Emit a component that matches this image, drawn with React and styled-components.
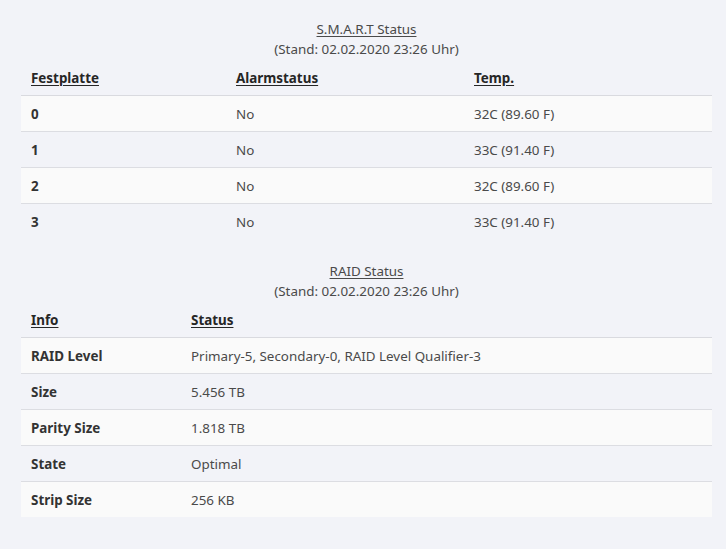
import React from "react";
import styled, { createGlobalStyle } from "styled-components";

// --------------------------------------------------

const GlobalStyle = createGlobalStyle`
	html, body {
		margin: 0;
		padding: 0;
		background: #f2f3f8;
	}

	body {
		font-family: "Noto Sans", "Open Sans", "Liberation Sans", sans-serif;
		font-size: 13.4px;
		color: #454545;
	}
`;

const Page = styled.div`
	padding: 19px 14px 0 21px;
	min-height: 549px;
	box-sizing: border-box;
`;

const Section = styled.section`
	margin-bottom: ${ props => props.gap || 0 }px;
`;

const Caption = styled.div`
	text-align: center;
	line-height: 20px;
	color: #4a4a4a;
`;

const CaptionTitle = styled.div`
	text-decoration: underline;
	text-underline-offset: 2px;
`;

const Table = styled.table`
	width: 100%;
	border-collapse: collapse;
	table-layout: fixed;
	margin-top: 2px;
`;

const HeadCell = styled.th`
	text-align: left;
	font-weight: 700;
	color: #262626;
	text-decoration: underline;
	text-underline-offset: 2px;
	padding: 8px 10px 7px;
	height: 19px;
	line-height: 19px;
	border-bottom: 1px solid #d9dadf;
`;

const Row = styled.tr`
	background: ${ props => props.striped ? "#fafafa" : "transparent" };
	border-bottom: ${ props => props.last ? "none" : "1px solid #dcdde2" };
`;

const Cell = styled.td`
	padding: 2px 10px 0;
	height: 33px;
	line-height: 19px;
	font-weight: ${ props => props.bold ? 700 : 400 };
	color: ${ props => props.bold ? "#333" : "#4a4a4a" };
`;

// --------------------------------------------------

const smartRows = [
	[ "0", "No", "32C (89.60 F)", ],
	[ "1", "No", "33C (91.40 F)", ],
	[ "2", "No", "32C (89.60 F)", ],
	[ "3", "No", "33C (91.40 F)", ],
];

const raidRows = [
	[ "RAID Level", "Primary-5, Secondary-0, RAID Level Qualifier-3", ],
	[ "Size", "5.456 TB", ],
	[ "Parity Size", "1.818 TB", ],
	[ "State", "Optimal", ],
	[ "Strip Size", "256 KB", ],
];

const StatusTable = ( { title, stand, headers, widths, rows, lastBorder, }, ) => (
	<>
		<Caption>
			<CaptionTitle>{ title }</CaptionTitle>
			<div>(Stand: { stand } Uhr)</div>
		</Caption>
		<Table>
			<colgroup>
				{ widths.map( ( w, i ) => <col key = { i } width = { w } /> ) }
			</colgroup>
			<thead>
				<tr>
					{ headers.map( h => <HeadCell key = { h }>{ h }</HeadCell> ) }
				</tr>
			</thead>
			<tbody>
				{ rows.map( ( row, i ) => (
					<Row key = { i } striped = { i % 2 === 0 } last = { !lastBorder && i === rows.length - 1 }>
						{ row.map( ( c, j ) => (
							<Cell key = { j } bold = { j === 0 }>{ c }</Cell>
						) ) }
					</Row>
				) ) }
			</tbody>
		</Table>
	</>
);

const App = () => (
	<>
		<GlobalStyle />
		<Page>
			<Section gap = { 22 }>
				<StatusTable
					title = "S.M.A.R.T Status"
					stand = "02.02.2020 23:26"
					headers = { [ "Festplatte", "Alarmstatus", "Temp.", ] }
					widths = { [ 205, 238, "*", ] }
					rows = { smartRows }
				/>
			</Section>
			<Section>
				<StatusTable
					title = "RAID Status"
					stand = "02.02.2020 23:26"
					headers = { [ "Info", "Status", ] }
					widths = { [ 160, "*", ] }
					rows = { raidRows }
				/>
			</Section>
		</Page>
	</>
);

export default App;
